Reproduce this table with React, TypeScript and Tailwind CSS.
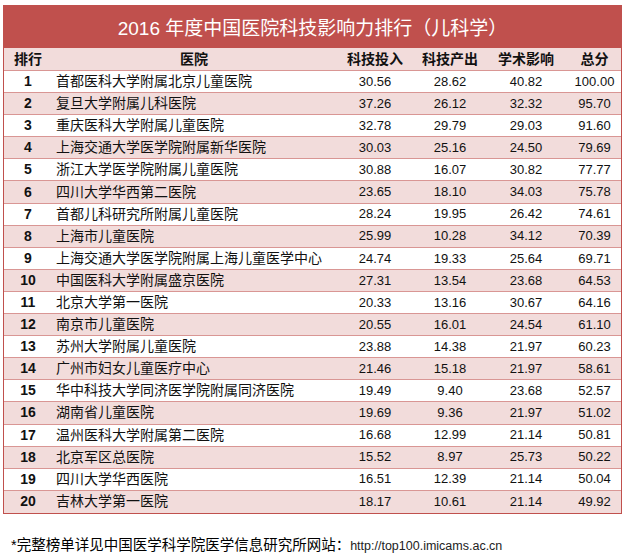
const rows: [number, string, string, string, string, string][] = [
  [1, "首都医科大学附属北京儿童医院", "30.56", "28.62", "40.82", "100.00"],
  [2, "复旦大学附属儿科医院", "37.26", "26.12", "32.32", "95.70"],
  [3, "重庆医科大学附属儿童医院", "32.78", "29.79", "29.03", "91.60"],
  [4, "上海交通大学医学院附属新华医院", "30.03", "25.16", "24.50", "79.69"],
  [5, "浙江大学医学院附属儿童医院", "30.88", "16.07", "30.82", "77.77"],
  [6, "四川大学华西第二医院", "23.65", "18.10", "34.03", "75.78"],
  [7, "首都儿科研究所附属儿童医院", "28.24", "19.95", "26.42", "74.61"],
  [8, "上海市儿童医院", "25.99", "10.28", "34.12", "70.39"],
  [9, "上海交通大学医学院附属上海儿童医学中心", "24.74", "19.33", "25.64", "69.71"],
  [10, "中国医科大学附属盛京医院", "27.31", "13.54", "23.68", "64.53"],
  [11, "北京大学第一医院", "20.33", "13.16", "30.67", "64.16"],
  [12, "南京市儿童医院", "20.55", "16.01", "24.54", "61.10"],
  [13, "苏州大学附属儿童医院", "23.88", "14.38", "21.97", "60.23"],
  [14, "广州市妇女儿童医疗中心", "21.46", "15.18", "21.97", "58.61"],
  [15, "华中科技大学同济医学院附属同济医院", "19.49", "9.40", "23.68", "52.57"],
  [16, "湖南省儿童医院", "19.69", "9.36", "21.97", "51.02"],
  [17, "温州医科大学附属第二医院", "16.68", "12.99", "21.14", "50.81"],
  [18, "北京军区总医院", "15.52", "8.97", "25.73", "50.22"],
  [19, "四川大学华西医院", "16.51", "12.39", "21.14", "50.04"],
  [20, "吉林大学第一医院", "18.17", "10.61", "21.14", "49.92"],
];

export default function App() {
  return (
    <div className="w-[626px] h-[559px] bg-white pt-[5px] font-['Liberation_Sans','Noto_Sans_CJK_SC',sans-serif] text-[#111]">
      <div className="ml-[3px] w-[619px] border border-[#c0504d]">
        {/* Title */}
        <div className="h-[42px] bg-[#c0504d] flex items-center justify-center pt-[4px] text-white text-[19px]">
          2016 年度中国医院科技影响力排行（儿科学）
        </div>

        {/* Header */}
        <div className="grid grid-cols-[48px_284px_78px_72px_80px_57px] h-[23px] items-center bg-[#f2dcdb] border-b border-[#d99694] text-[14px] font-bold">
          <div className="text-center">排行</div>
          <div className="text-center">医院</div>
          <div className="text-center">科技投入</div>
          <div className="text-center">科技产出</div>
          <div className="text-center">学术影响</div>
          <div className="text-center">总分</div>
        </div>

        {/* Body */}
        {rows.map(([rank, name, a, b, c, total]) => (
          <div
            key={rank}
            className={`grid grid-cols-[48px_284px_78px_72px_80px_57px] h-[22.1px] items-center border-b border-[#d99694] last:border-b-0 ${
              rank % 2 === 0 ? "bg-[#f2dcdb]" : "bg-white"
            }`}
          >
            <div className="text-center text-[14px] font-bold">{rank}</div>
            <div className="pl-[4px] text-[14px] whitespace-nowrap">{name}</div>
            <div className="text-center text-[13px]">{a}</div>
            <div className="text-center text-[13px]">{b}</div>
            <div className="text-center text-[13px]">{c}</div>
            <div className="text-center text-[13px]">{total}</div>
          </div>
        ))}
      </div>

      {/* Footnote */}
      <div className="mt-[22px] ml-[11px] leading-[18px] text-[14.5px] text-black whitespace-nowrap">
        *完整榜单详见中国医学科学院医学信息研究所网站：
        <span className="text-[12.5px] text-[#222]">http://top100.imicams.ac.cn</span>
      </div>
    </div>
  );
}
